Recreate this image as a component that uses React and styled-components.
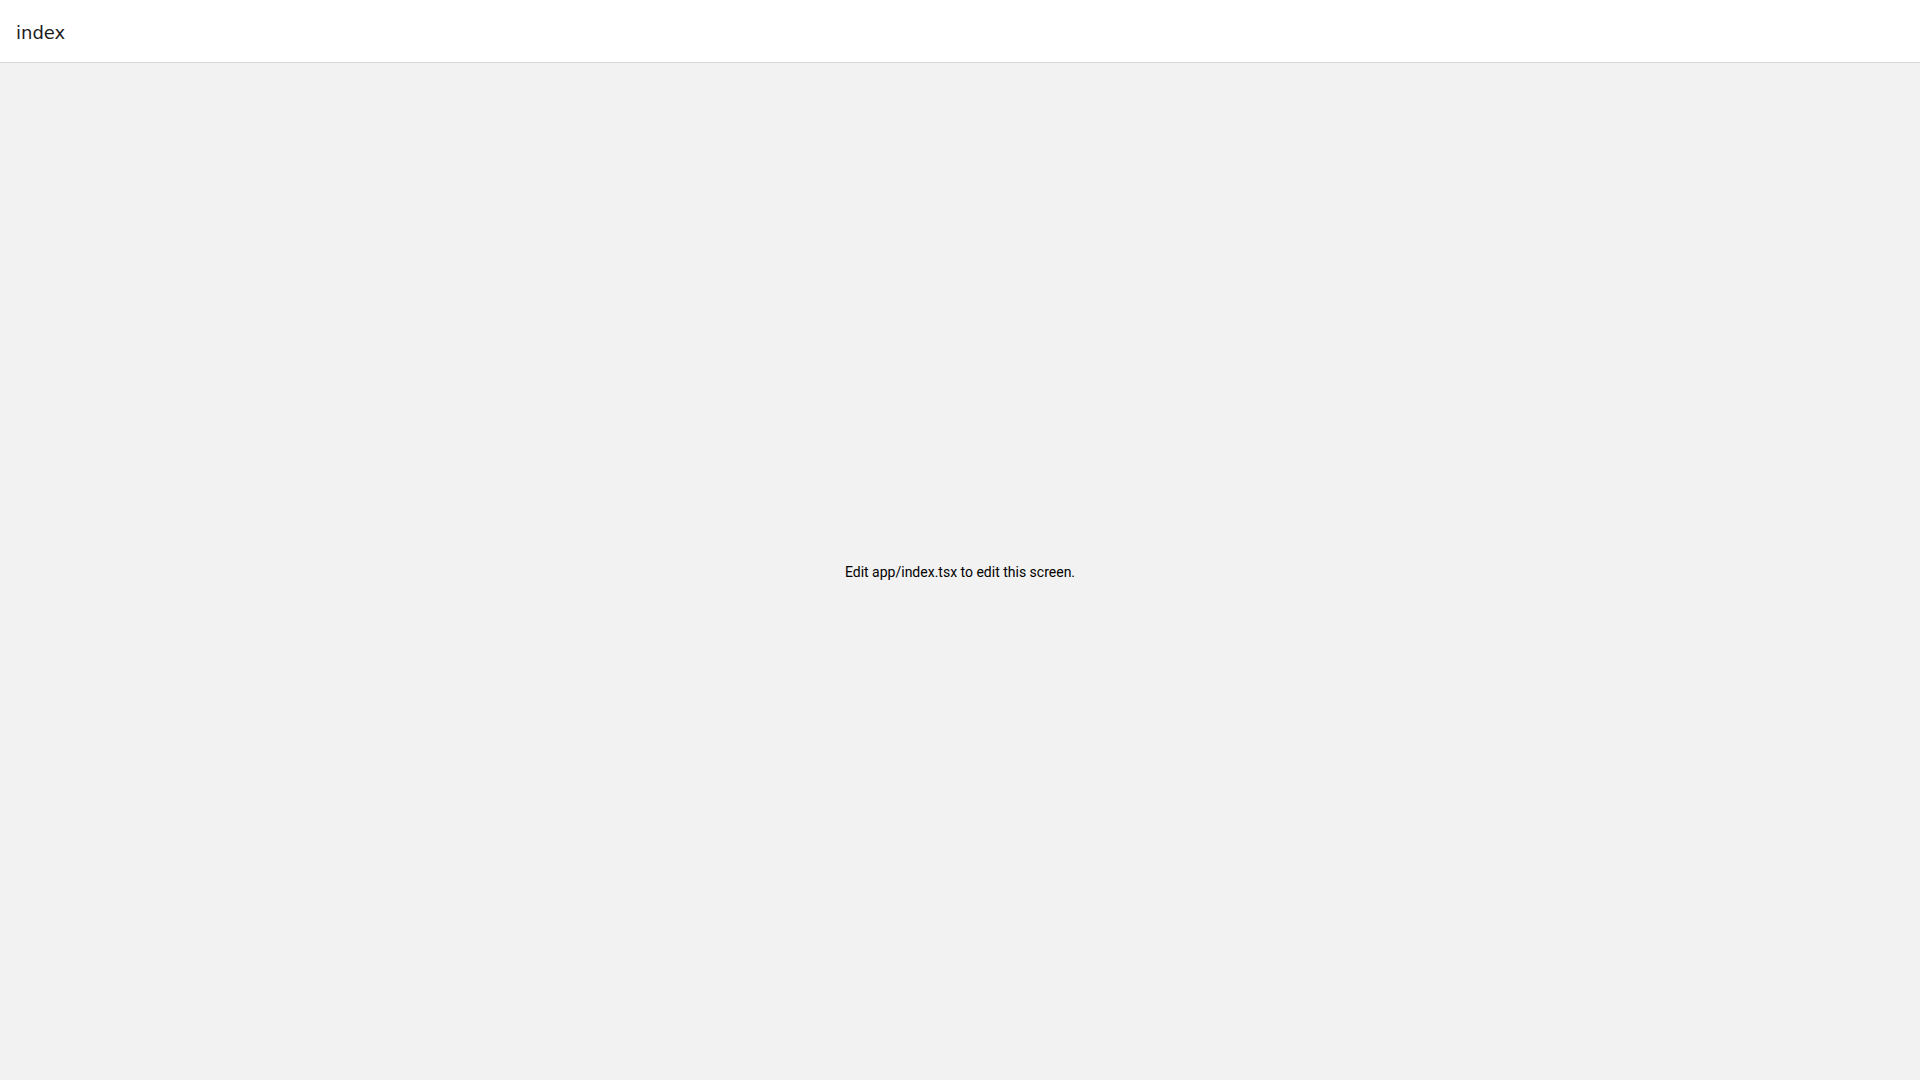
import React from 'react';
import styled, { createGlobalStyle } from 'styled-components';

const GlobalStyle = createGlobalStyle`
   html, body, #root {
      margin: 0;
      padding: 0;
      height: 100%;
   }
   body {
      background: #f2f2f2;
      font-family: "DejaVu Sans", sans-serif;
   }
`;

const Screen = styled.div`
   display: flex;
   flex-direction: column;
   height: 100vh;
`;

const Header = styled.header`
   height: 62px;
   flex-shrink: 0;
   display: flex;
   align-items: center;
   padding: 2px 16px 0;
   background: #ffffff;
   border-bottom: 1px solid #d8d8d8;
   box-sizing: border-box;
   height: 63px;
`;

const Title = styled.h1`
   margin: 0;
   font-family: "DejaVu Sans", sans-serif;
   font-size: 18px;
   font-weight: 400;
   color: #1c1c1e;
`;

const Body = styled.main`
   flex: 1;
   display: flex;
   align-items: center;
   justify-content: center;
   background: #f2f2f2;
`;

const Hint = styled.p`
   margin: 0;
   font-family: Roboto, "Liberation Sans", sans-serif;
   font-size: 14px;
   color: #000000;
`;

const App = () => (
   <>
      <GlobalStyle />
      <Screen>
         <Header>
            <Title>index</Title>
         </Header>
         <Body>
            <Hint>Edit app/index.tsx to edit this screen.</Hint>
         </Body>
      </Screen>
   </>
);

export default App;
